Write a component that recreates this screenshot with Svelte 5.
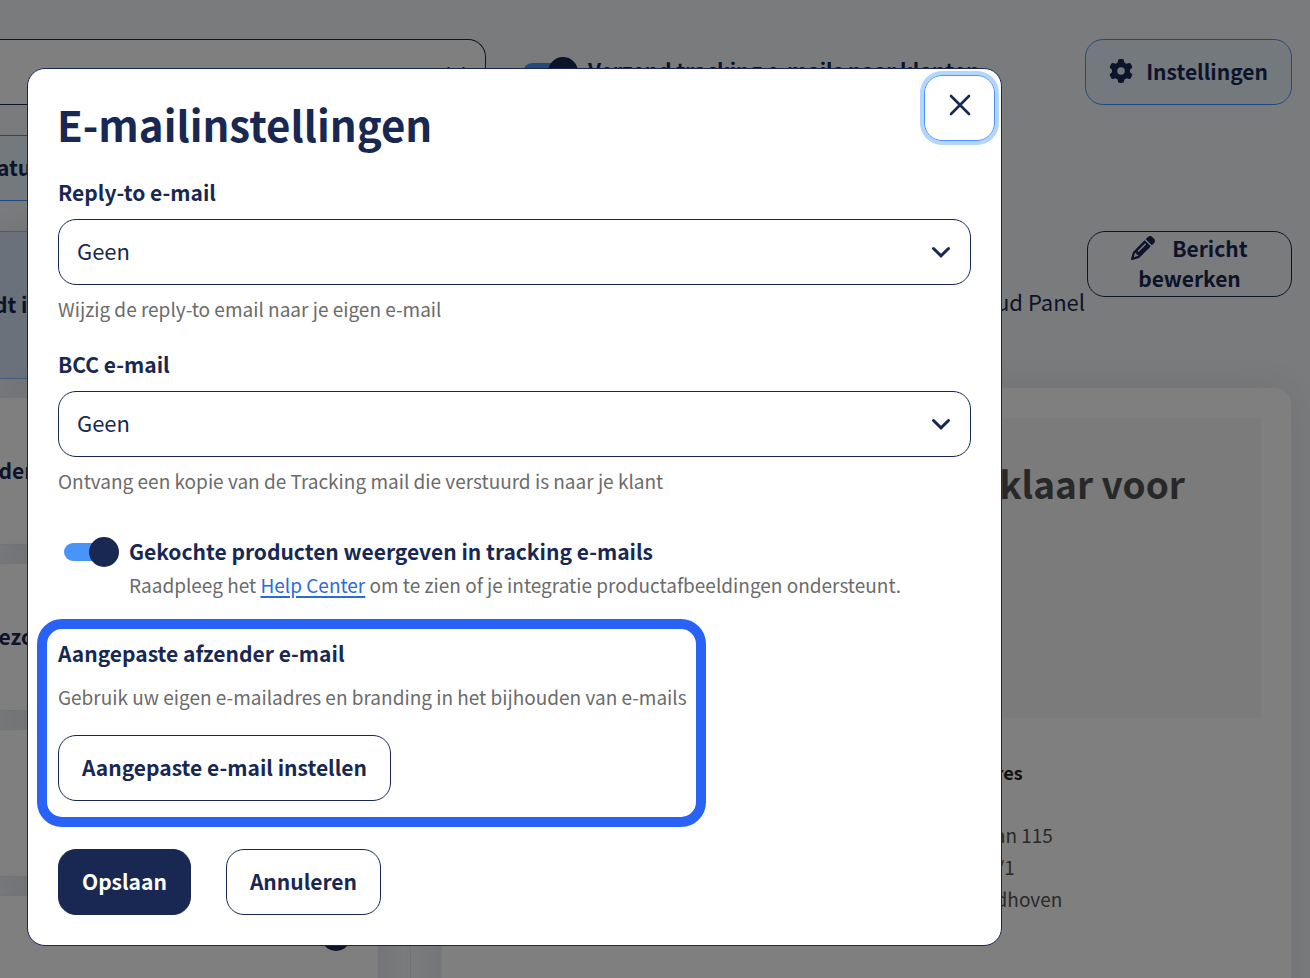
<script lang="ts">
    let replyTo = $state("Geen");
    let bcc = $state("Geen");
    let showProducts = $state(true);
    let sendTracking = $state(true);
    let open = $state(true);

    // Message list behind the dialog.
    const messages = [
        { title: "rdt ingepakt", selected: true, active: false },
        { title: "nderweg", selected: false, active: false },
        { title: "bezorgd", selected: false, active: false },
        { title: "", selected: false, active: false },
        { title: "", selected: false, active: true },
    ];
</script>

{#snippet chevron()}
    <svg class="chevron" viewBox="0 0 20 20" aria-hidden="true">
        <path d="M2.5 6.5 10 13.8 17.5 6.5" />
    </svg>
{/snippet}

<div class="page">
    <div class="toolbar">
        <div class="select-wrap shop">
            <select aria-label="Winkel"><option></option></select>
            {@render chevron()}
        </div>
        <label class="toggle-label">
            <input class="toggle" type="checkbox" bind:checked={sendTracking} />
            <span>Verzend tracking e-mails naar klanten</span>
        </label>
        <button class="btn tinted settings" onclick={() => (open = true)}>
            <svg viewBox="0 0 512 512" aria-hidden="true">
                <path
                    d="M495.9 166.6c3.2 8.7 .5 18.4-6.4 24.6l-43.3 39.4c1.1 8.3 1.7 16.8 1.7 25.4s-.6 17.1-1.7 25.4l43.3 39.4c6.9 6.2 9.6 15.9 6.4 24.6c-4.4 11.9-9.7 23.3-15.8 34.3l-4.7 8.1c-6.6 11-14 21.4-22.1 31.2c-5.9 7.2-15.7 9.6-24.5 6.8l-55.7-17.7c-13.4 10.3-28.2 18.9-44 25.4l-12.5 57.1c-2 9.1-9 16.3-18.2 17.8c-13.8 2.3-28 3.5-42.5 3.5s-28.7-1.2-42.5-3.5c-9.2-1.5-16.2-8.7-18.2-17.8l-12.5-57.1c-15.8-6.5-30.6-15.1-44-25.4L83.1 425.9c-8.8 2.8-18.6 .3-24.5-6.8c-8.1-9.8-15.5-20.2-22.1-31.2l-4.7-8.1c-6.1-11-11.4-22.4-15.8-34.3c-3.2-8.7-.5-18.4 6.4-24.6l43.3-39.4C64.6 273.1 64 264.6 64 256s.6-17.1 1.7-25.4L22.4 191.2c-6.9-6.2-9.6-15.9-6.4-24.6c4.4-11.9 9.7-23.3 15.8-34.3l4.7-8.1c6.6-11 14-21.4 22.1-31.2c5.9-7.2 15.7-9.6 24.5-6.8l55.7 17.7c13.4-10.3 28.2-18.9 44-25.4l12.5-57.1c2-9.1 9-16.3 18.2-17.8C227.3 1.2 241.5 0 256 0s28.7 1.2 42.5 3.5c9.2 1.5 16.2 8.7 18.2 17.8l12.5 57.1c15.8 6.5 30.6 15.1 44 25.4l55.7-17.7c8.8-2.8 18.6-.3 24.5 6.8c8.1 9.8 15.5 20.2 22.1 31.2l4.7 8.1c6.1 11 11.4 22.4 15.8 34.3zM256 336a80 80 0 1 0 0-160 80 80 0 1 0 0 160z"
                />
            </svg>
            Instellingen
        </button>
    </div>

    <button class="btn tinted tab">atus</button>

    <div class="columns">
        <ul class="messages">
            {#each messages as message}
                <li class:selected={message.selected}>
                    <span>{message.title}</span>
                    {#if message.active}
                        <input
                            class="toggle"
                            type="checkbox"
                            aria-label="Actief"
                            checked
                        />
                    {/if}
                </li>
            {/each}
        </ul>
        <div class="divider"></div>
        <div class="detail">
            <div class="detail-head">
                <p>Cloud Panel</p>
                <button class="btn edit">
                    <svg viewBox="0 0 512 512" aria-hidden="true">
                        <path
                            d="M410.3 231l11.3-11.3-33.9-33.9-62.1-62.1L291.7 89.8l-11.3 11.3-22.6 22.6L58.6 322.9c-10.4 10.4-18 23.3-22.2 37.4L1 480.7c-2.5 8.4-.2 17.5 6.1 23.7s15.3 8.5 23.7 6.1l120.3-35.4c14.1-4.2 27-11.8 37.4-22.2L387.7 253.7 410.3 231zM160 399.4l-9.1 22.7c-4 3.1-8.5 5.4-13.3 6.9L59.4 452l23-78.1c1.4-4.9 3.8-9.4 6.9-13.3l22.7-9.1v32c0 8.8 7.2 16 16 16h32zM362.7 18.7L348.3 33.2 325.7 55.8 314.3 67.1l33.9 33.9 62.1 62.1 33.9 33.9 11.3-11.3 22.6-22.6 14.5-14.5c25-25 25-65.5 0-90.5L453.3 18.7c-25-25-65.5-25-90.5 0zm-47.4 168l-144 144c-6.2 6.2-16.4 6.2-22.6 0s-6.2-16.4 0-22.6l144-144c6.2-6.2 16.4-6.2 22.6 0s6.2 16.4 0 22.6z"
                        />
                    </svg>
                    Bericht bewerken
                </button>
            </div>
            <article class="preview">
                <div class="banner"><h1>klaar voor</h1></div>
                <address>
                    <strong>dres</strong>
                    <span>aan 115</span>
                    <span>D/1</span>
                    <span>ndhoven</span>
                </address>
            </article>
        </div>
    </div>
</div>

{#if open}
    <div class="backdrop">
        <div
            class="dialog"
            role="dialog"
            aria-modal="true"
            aria-labelledby="dialog-title"
        >
            <header>
                <h2 id="dialog-title">E-mailinstellingen</h2>
                <button
                    class="btn close"
                    aria-label="Sluiten"
                    onclick={() => (open = false)}
                >
                    <svg viewBox="0 0 24 24" aria-hidden="true">
                        <path d="M3 3 21 21M21 3 3 21" />
                    </svg>
                </button>
            </header>

            <div class="body">
                <div class="field">
                    <label for="reply-to">Reply-to e-mail</label>
                    <div class="select-wrap">
                        <select id="reply-to" bind:value={replyTo}>
                            <option>Geen</option>
                        </select>
                        {@render chevron()}
                    </div>
                    <p class="hint">Wijzig de reply-to email naar je eigen e-mail</p>
                </div>

                <div class="field">
                    <label for="bcc">BCC e-mail</label>
                    <div class="select-wrap">
                        <select id="bcc" bind:value={bcc}>
                            <option>Geen</option>
                        </select>
                        {@render chevron()}
                    </div>
                    <p class="hint">
                        Ontvang een kopie van de Tracking mail die verstuurd is naar je klant
                    </p>
                </div>

                <div class="products">
                    <input
                        id="products"
                        class="toggle"
                        type="checkbox"
                        bind:checked={showProducts}
                    />
                    <div>
                        <label for="products">
                            Gekochte producten weergeven in tracking e-mails
                        </label>
                        <p class="hint">
                            Raadpleeg het <a href="#help">Help Center</a> om te zien
                            of je integratie productafbeeldingen ondersteunt.
                        </p>
                    </div>
                </div>

                <section class="highlight">
                    <h3>Aangepaste afzender e-mail</h3>
                    <p class="hint">
                        Gebruik uw eigen e-mailadres en branding in het bijhouden van e-mails
                    </p>
                    <button class="btn">Aangepaste e-mail instellen</button>
                </section>

                <footer>
                    <button class="btn primary">Opslaan</button>
                    <button class="btn" onclick={() => (open = false)}>Annuleren</button>
                </footer>
            </div>
        </div>
    </div>
{/if}

<style>
    :global(body) {
        overflow: hidden;
    }

    .page,
    .backdrop {
        box-sizing: border-box;
        font-family: "Noto Sans CJK JP", "Noto Sans", sans-serif;
        font-size: 22px;
        line-height: 30px;
        color: #182853;
    }

    .page {
        display: flex;
        flex-direction: column;
        height: 100vh;
        padding: 39px 18px 0 0;
        overflow: hidden;
        background: #f5f7fa;
    }

    h1,
    h2,
    h3,
    p,
    ul {
        margin: 0;
        padding: 0;
    }

    .btn {
        box-sizing: border-box;
        min-height: 66px;
        padding: 0 23px 3px;
        border: 1px solid #182853;
        border-radius: 18px;
        background: transparent;
        color: #182853;
        font: inherit;
        font-size: 21px;
        font-weight: 700;
        cursor: pointer;
    }

    .tinted {
        border-color: #4795fa;
        background: #e9f3fb;
    }

    .primary {
        background: #182853;
        color: #fff;
    }

    .btn svg {
        width: 24px;
        height: 24px;
        fill: currentColor;
    }

    .select-wrap {
        display: grid;
        align-items: center;
    }

    .select-wrap > * {
        grid-area: 1 / 1;
    }

    select {
        appearance: none;
        box-sizing: border-box;
        width: 100%;
        height: 66px;
        padding: 0 48px 4px 18px;
        border: 1px solid #182853;
        border-radius: 18px;
        background: #fff;
        color: inherit;
        font: inherit;
    }

    .chevron {
        justify-self: end;
        width: 20px;
        height: 20px;
        margin-right: 20px;
        fill: none;
        stroke: #182853;
        stroke-width: 3;
        stroke-linecap: round;
        pointer-events: none;
    }

    .toggle {
        appearance: none;
        display: flex;
        flex: none;
        align-items: center;
        width: 55px;
        height: 30px;
        margin: 0;
    }

    .toggle::before {
        content: "";
        width: 44px;
        height: 18px;
        border-radius: 9px;
        background: #4795fa;
    }

    .toggle::after {
        content: "";
        width: 30px;
        height: 30px;
        margin-left: -19px;
        border-radius: 50%;
        background: #182853;
    }

    .toggle:not(:checked)::after {
        margin-left: -44px;
    }

    /* Page behind the dialog */
    .toolbar {
        display: flex;
        align-items: center;
    }

    .shop {
        width: 486px;
        margin-right: 37px;
    }

    .shop select {
        border-left: 0;
        border-radius: 0 18px 18px 0;
    }

    .toggle-label {
        display: flex;
        align-items: center;
        gap: 10px;
        white-space: nowrap;
    }

    .toggle-label span {
        padding-bottom: 4px;
    }

    .settings {
        display: flex;
        align-items: center;
        gap: 13px;
        margin-left: auto;
    }

    .tab {
        flex: none;
        width: 200px;
        margin-top: 30px;
        padding-left: 0;
        border-left: 0;
        border-radius: 0 18px 18px 0;
        text-align: left;
        text-indent: -3px;
    }

    .columns {
        display: flex;
        flex: 1;
        min-height: 0;
        margin-top: 30px;
    }

    .messages {
        display: flex;
        flex-direction: column;
        gap: 18px;
        width: 379px;
        list-style: none;
    }

    .messages li {
        box-sizing: border-box;
        display: flex;
        flex: none;
        align-items: center;
        justify-content: space-between;
        height: 148px;
        padding: 0 27px 2px 0;
        border: 1px solid #e6e8ef;
        border-width: 1px 1px 1px 0;
        background: #fff;
        box-shadow: 0 0 30px rgba(24, 40, 83, 0.12);
        font-size: 21px;
        font-weight: 700;
        text-indent: -15px;
    }

    .messages li.selected {
        border-color: #84b8f8;
        background: #d7e3f6;
    }

    .messages .toggle {
        align-self: flex-start;
        margin-top: 25px;
    }

    .divider {
        width: 31px;
        border-right: 1px solid #e2e5ec;
    }

    .detail {
        display: flex;
        flex: 1;
        flex-direction: column;
        gap: 90px;
        margin-left: 30px;
    }

    .detail-head {
        display: flex;
        justify-content: flex-end;
        gap: 2px;
    }

    .detail-head p {
        padding-top: 55px;
        margin-bottom: -19px;
    }

    .edit {
        width: 205px;
        height: 66px;
    }

    .edit svg {
        margin-right: 12px;
        vertical-align: -3px;
    }

    .preview {
        flex: 1;
        margin-bottom: -40px;
        padding: 30px;
        border: 1px solid #eef0f5;
        border-radius: 18px;
        background: #fff;
        box-shadow: 0 0 40px rgba(24, 40, 83, 0.1);
    }

    .banner {
        box-sizing: border-box;
        height: 300px;
        padding: 38px 76px;
        background: #f6f6f6;
        color: #505050;
        text-align: right;
    }

    .banner h1 {
        font-size: 37px;
        line-height: 54px;
    }

    address {
        display: flex;
        flex-direction: column;
        width: 277px;
        margin: 38px 0 0 auto;
        color: #555;
        font-size: 19px;
        font-style: normal;
        line-height: 32px;
    }

    address strong {
        margin-bottom: 31px;
        color: #222;
        font-size: 18px;
    }

    /* Dialog */
    .backdrop {
        position: fixed;
        inset: 0;
        padding: 68px 308px 32px 27px;
        background: rgba(0, 0, 0, 0.5);
    }

    .dialog {
        border: 1px solid #182853;
        border-radius: 18px;
        background: #fff;
    }

    header {
        display: flex;
        align-items: flex-start;
        justify-content: space-between;
        padding: 6px 6px 0 29px;
    }

    h2 {
        padding-top: 24px;
        font-size: 42px;
        line-height: 50px;
    }

    .close {
        width: 71px;
        padding: 0;
        border-color: #4795fa;
        box-shadow: 0 0 0 4px #b4d5fd;
    }

    .close svg {
        display: block;
        margin: -6px auto 0;
        fill: none;
        stroke: currentColor;
        stroke-width: 2.6;
        stroke-linecap: round;
    }

    .body {
        padding: 28px 30px 30px;
    }

    .field {
        display: flex;
        flex-direction: column;
        margin-bottom: 26px;
    }

    .field .select-wrap {
        margin: 12px 0;
    }

    .field .hint {
        margin-bottom: 2px;
    }

    label,
    h3 {
        font-size: 21px;
        font-weight: 700;
    }

    .hint {
        color: #6b6b6b;
        font-size: 19px;
        line-height: 24px;
    }

    .hint a {
        color: #2b6cd4;
        text-underline-offset: 3px;
        text-decoration-thickness: 2px;
    }

    .products {
        display: flex;
        gap: 10px;
        margin: 42px 0 20px;
        padding-left: 6px;
    }

    .products label {
        display: block;
        line-height: 28px;
    }

    .products .hint {
        margin: 8px 0 2px;
    }

    .highlight {
        width: fit-content;
        margin: 0 0 22px -21px;
        padding: 9px 9px 16px 11px;
        border: 10px solid #2962f6;
        border-radius: 25px;
    }

    .highlight .hint {
        margin: 17px 0 26px;
    }

    footer {
        display: flex;
        gap: 35px;
    }
</style>
